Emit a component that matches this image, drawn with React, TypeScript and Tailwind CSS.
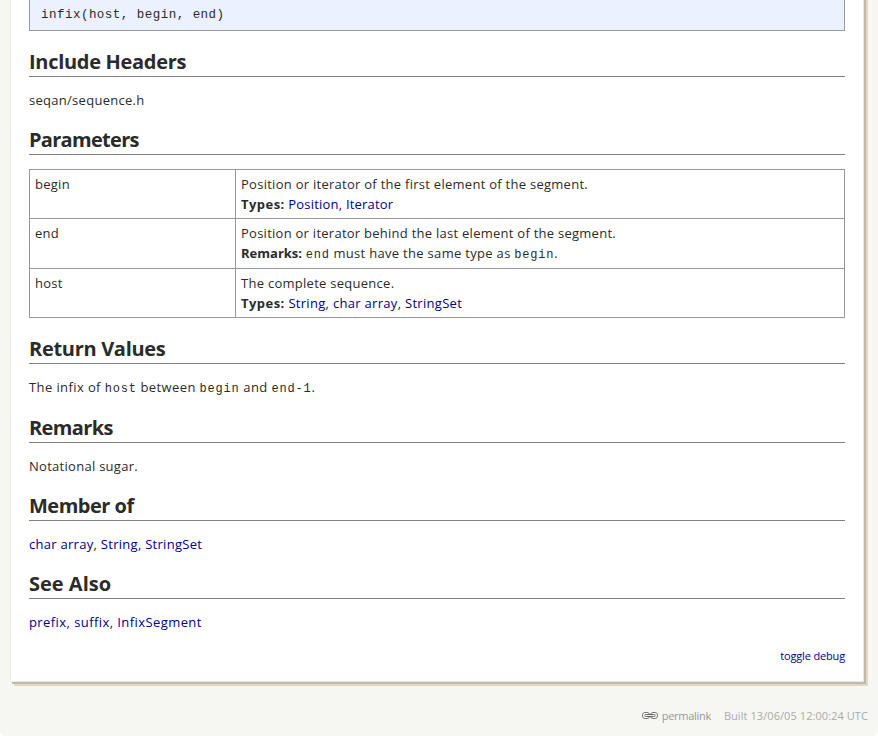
import type { ReactNode } from "react";

function Heading({ children, className = "" }: { children: ReactNode; className?: string }) {
  return (
    <h2 className={`flex items-end border-b border-[#808080] text-[20px] leading-[28px] font-bold whitespace-nowrap ${className}`}>
      <span>{children}</span>
    </h2>
  );
}

function Text({ children, className = "tracking-[0.28px]" }: { children: ReactNode; className?: string }) {
  return <p className={`h-[33px] pt-[13px] whitespace-nowrap ${className}`}>{children}</p>;
}

function Link({ children }: { children: ReactNode }) {
  return <a className="text-[#00008b]">{children}</a>;
}

function Code({ children }: { children: ReactNode }) {
  return <code className="font-['Liberation_Mono',monospace] text-[12px] leading-none tracking-[0.8px]">{children}</code>;
}

function Row({ name, children, className }: { name: string; children: ReactNode; className: string }) {
  return (
    <div className={`flex border-x border-t border-[#999] whitespace-nowrap ${className}`}>
      <div className="w-[206px] border-r border-[#999] pt-[4px] pl-[5px]">{name}</div>
      <div className="pt-[4px] pl-[5px]">{children}</div>
    </div>
  );
}

export default function App() {
  return (
    <div className="h-[736px] w-[878px] overflow-hidden bg-white font-['Open_Sans',sans-serif] text-[13px] leading-[20px] text-[#2b2b2b]">
      <div className="flex h-[736px] w-[878px] flex-col rounded-b-[5px] bg-[#f6f7f2] pl-[10px]">
        <main className="-mt-2 h-[690px] w-[854px] shrink-0 border-x border-b border-[#e8e8e4] bg-white px-[18px] pt-2 shadow-[2px_2px_0_#c4b9a3,4px_4px_0_#e0d9ca]">
          <pre className="h-[31px] border-x border-b border-[#999] bg-[#ebf1ff] pt-[5px] pl-[11px] font-['Liberation_Mono',monospace] text-[12.5px] tracking-[0.48px]">infix(host, begin, end)</pre>
          <Heading className="h-[46px] tracking-[-0.3px]">Include Headers</Heading>
          <Text>seqan/sequence.h</Text>
          <Heading className="h-[45px] tracking-[-0.7px]">Parameters</Heading>
          <div className="mt-[14px] tracking-[0.27px]">
            <Row name="begin" className="h-[49px]">
              <p>Position or iterator of the first element of the segment.</p>
              <p className="tracking-[0.2px]"><b className="tracking-[0.45px]">Types:</b> <Link>Position</Link>, <Link>Iterator</Link></p>
            </Row>
            <Row name="end" className="h-[50px]">
              <p className="tracking-[0.26px]">Position or iterator behind the last element of the segment.</p>
              <p className="tracking-[0.31px]"><b className="tracking-[0px]">Remarks:</b> <Code>end</Code> must have the same type as <Code>begin</Code>.</p>
            </Row>
            <Row name="host" className="h-[50px] border-b">
              <p>The complete sequence.</p>
              <p className="tracking-[0.3px]"><b className="tracking-[0.45px]">Types:</b> <Link>String</Link>, <Link>char array</Link>, <Link>StringSet</Link></p>
            </Row>
          </div>
          <Heading className="h-[46px] tracking-[-0.3px]">Return Values</Heading>
          <Text className="tracking-[0.4px]">The infix of <Code>host</Code> between <Code>begin</Code> and <Code>end-1</Code>.</Text>
          <Heading className="h-[46px] tracking-[-0.6px]">Remarks</Heading>
          <Text>Notational sugar.</Text>
          <Heading className="h-[45px] tracking-[-0.5px]">Member of</Heading>
          <Text><Link>char array</Link>, <Link>String</Link>, <Link>StringSet</Link></Text>
          <Heading className="h-[45px]">See Also</Heading>
          <Text className="tracking-[0.42px]"><Link>prefix</Link>, <Link>suffix</Link>, <Link>InfixSegment</Link></Text>
          <div className="mt-[14px] text-right text-[11px] tracking-[-0.15px]"><Link>toggle debug</Link></div>
        </main>
        <footer className="flex h-[54px] items-center justify-end pt-[13px] pr-[10px] text-[11px] tracking-[0.07px] text-[#aaa]">
          <svg className="mr-[4px] h-[8px] w-[16px]" viewBox="0 0 16 8" fill="none">
            <rect x="0.5" y="0.5" width="7" height="6" rx="2.5" fill="#fff" stroke="#777" />
            <rect x="8.5" y="0.5" width="7" height="6" rx="2.5" fill="#fff" stroke="#777" />
            <path d="M5.5 2.5h-2.5v2h2.5M10.5 2.5h2.5v2h-2.5" stroke="#888" />
            <path d="M5 3.5h6" stroke="#666" strokeWidth="3" />
            <path d="M4.5 3.5h7" stroke="#eee" />
          </svg>
          <span className="mr-[13px] tracking-[-0.3px] text-[#999]">permalink</span>
          <span>Built 13/06/05 12:00:24 UTC</span>
        </footer>
      </div>
    </div>
  );
}
